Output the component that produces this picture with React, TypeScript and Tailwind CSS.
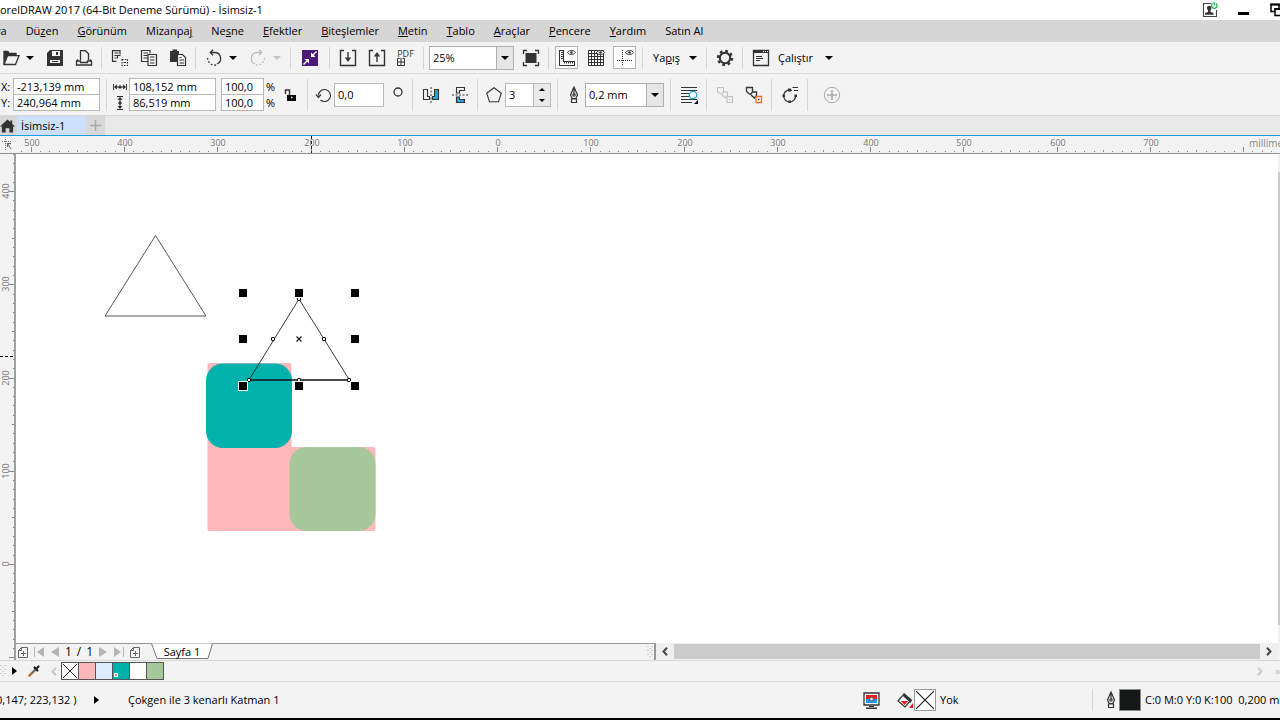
import { useState } from "react";
import type { ReactNode } from "react";
import clsx from "clsx";

const menus: Array<{ text: string; key?: number }> = [
  { text: "Düzen", key: 2 },
  { text: "Görünüm", key: 0 },
  { text: "Mizanpaj", key: 7 },
  { text: "Nesne", key: 2 },
  { text: "Efektler", key: 0 },
  { text: "Biteşlemler", key: 0 },
  { text: "Metin", key: 0 },
  { text: "Tablo", key: 0 },
  { text: "Araçlar", key: 0 },
  { text: "Pencere", key: 0 },
  { text: "Yardım", key: 0 },
  { text: "Satın Al" },
];

const swatches = [
  { name: "Pembe", className: "bg-[#ffb7ba]" },
  { name: "Açık mavi", className: "bg-[#deedfc]" },
  { name: "Turkuaz", className: "bg-[#00b0aa]" },
  { name: "Beyaz", className: "bg-white" },
  { name: "Yeşil", className: "bg-[#a6c89b]" },
];

// Pixels per 100 mm at 25% zoom
const STEP = 93.25;
const H_ZERO = 498;
const V_ZERO = 410;

function Icon({ children, size = 18 }: { children: ReactNode; size?: number }) {
  return (
    <svg width={size} height={size} viewBox={`0 0 ${size} ${size}`} fill="none" stroke="#333" strokeWidth="1.3" aria-hidden="true" className="shrink-0">
      {children}
    </svg>
  );
}

function Caret({ muted = false }: { muted?: boolean }) {
  return (
    <svg width="8" height="4" viewBox="0 0 8 4" aria-hidden="true">
      <path d="M0 0h8L4 4z" fill={muted ? "#c4c4c4" : "#000"} />
    </svg>
  );
}

function Separator({ tall = false }: { tall?: boolean }) {
  return (
    <div className="flex w-[7px] shrink-0 justify-center">
      <div className={clsx("w-px bg-[#d5d5d5]", tall ? "h-8" : "h-[22px]")} />
    </div>
  );
}

type ToolProps = {
  label: string;
  children: ReactNode;
  active?: boolean;
  className?: string;
};

function Tool({ label, children, active = false, className = "w-[29px]" }: ToolProps) {
  return (
    <button type="button" aria-label={label} className={clsx("flex h-6 shrink-0 items-center justify-center", className)}>
      <span className={clsx("flex h-[23px] w-[23px] items-center justify-center", active && "border border-[#b4b4b4] bg-white")}>
        {children}
      </span>
    </button>
  );
}

function CaretButton({ label, muted }: { label: string; muted?: boolean }) {
  return (
    <button type="button" aria-label={label} className="flex h-6 w-[15px] shrink-0 items-center pl-px">
      <Caret muted={muted} />
    </button>
  );
}

function Field({ label, value, className }: { label: string; value: string; className: string }) {
  return (
    <input
      aria-label={label}
      defaultValue={value}
      className={clsx("shrink-0 border border-[#b9b9b9] bg-white pl-[3px] outline-none focus:border-sky-500", className)}
    />
  );
}

function DropDown({ label, options, className }: { label: string; options: string[]; className: string }) {
  return (
    <div className={clsx("relative shrink-0", className)}>
      <select aria-label={label} className="h-6 w-full appearance-none border border-[#b0b0b0] bg-white pl-[3px] outline-none">
        {options.map((option) => (
          <option key={option}>{option}</option>
        ))}
      </select>
      <span className="pointer-events-none absolute inset-y-px right-px flex w-[17px] items-center justify-center border-l border-[#b0b0b0] bg-[#e6e6e6]">
        <Caret />
      </span>
    </div>
  );
}

function TitleBar() {
  return (
    <header className="flex h-5 items-center justify-between overflow-hidden bg-white">
      <h1 className="whitespace-nowrap">orelDRAW 2017 (64-Bit Deneme Sürümü) - İsimsiz-1</h1>
      <div className="-mr-[6px] flex items-center gap-5">
        <button type="button" aria-label="Hesap">
          <svg width="16" height="16" viewBox="0 0 16 16" aria-hidden="true">
            <path d="M9 1.500H1.500v13h13V8" fill="none" stroke="#444" strokeWidth="1.100" />
            <path d="M5 6a2.200 2.200 0 0 1 4.400 0c0 1.300-.7 1.700-.9 2.500V10l3 1v1.800H3V11l3-1V8.500C5.800 7.700 5 7.300 5 6z" fill="#333" />
            <path d="M10.600 1.600a2.700 2.700 0 1 0 3.300 0M12.200 0v3.600" fill="none" stroke="#1db455" strokeWidth="1.300" />
          </svg>
        </button>
        <button type="button" aria-label="Simge durumuna küçült">
          <svg width="12" height="14" viewBox="0 0 12 14" aria-hidden="true">
            <path d="M0 9h11v3H0z" fill="#000" />
          </svg>
        </button>
        <button type="button" aria-label="Önceki boyut">
          <svg width="16" height="14" viewBox="0 0 16 14" fill="none" stroke="#000" aria-hidden="true">
            <path d="M1 1.500h8v7H1z" strokeWidth="1.500" />
            <path d="M5 6h9v6.500H5z" fill="#fff" strokeWidth="1.500" />
            <path d="M.300 1.500h9.500M4.300 6h10" strokeWidth="2" />
          </svg>
        </button>
      </div>
    </header>
  );
}

function MenuBar() {
  return (
    <nav aria-label="Menü" className="flex h-[22px] items-center gap-[19px] overflow-hidden bg-[#d6d6d6]">
      <button type="button" className="-ml-[5px]">ya</button>
      {menus.map(({ text, key }) => (
        <button key={text} type="button" className="whitespace-nowrap">
          {key === undefined ? (
            text
          ) : (
            <>
              {text.slice(0, key)}
              <u className="underline-offset-1">{text[key]}</u>
              {text.slice(key + 1)}
            </>
          )}
        </button>
      ))}
    </nav>
  );
}

function Eye() {
  return (
    <>
      <path d="M9.500 3.500C11 .8 16 .8 17.500 3.500 16 6.200 11 6.200 9.500 3.500z" strokeWidth="1" fill="#fff" />
      <circle cx="13.500" cy="3.500" r="1.300" fill="#333" stroke="none" />
    </>
  );
}

function StandardBar() {
  return (
    <div role="toolbar" aria-label="Standart" className="flex h-8 items-center overflow-hidden border-b border-[#d8d8d8]">
      <Tool label="Aç" className="-ml-1 w-[29px]">
        <Icon>
          <path d="M2 15V2.500h4l1 2h7v2H5.300z" fill="#333" />
          <path d="M2 15.500 5.500 6.700H17l-3.500 8.800z" fill="#f3f3f3" />
        </Icon>
      </Tool>
      <CaretButton label="Son belgeler" />
      <Tool label="Kaydet">
        <Icon>
          <path d="M4 1h13v16H1V4z" fill="#333" stroke="none" />
          <path d="M6 2h8v5H6zM4 11h10v3H4z" fill="#f3f3f3" stroke="none" />
          <path d="M10 3h2v3h-2zM6 12h6v1H6z" fill="#333" stroke="none" />
        </Icon>
      </Tool>
      <Tool label="Yazdır">
        <Icon>
          <path d="M5.500 11V1.700h5l3 3V11" />
          <path d="M3 10.500 1.500 12v4h15v-4L15 10.500M1.500 12h4v1.500h7V12h4" />
        </Icon>
      </Tool>
      <Separator />
      <Tool label="Kes">
        <Icon>
          <path d="M9 5.500V1.600H1.500v10.800h4M3.500 4h4M3.500 6.500h4M3.500 9h2M6.500 9.500v-3h3" strokeWidth="1.200" />
          <path d="M11 10.500h5.500v6H11z" strokeDasharray="1.500 1.200" strokeWidth="1.100" />
          <path d="M12.500 13.500H15" strokeWidth="1" />
        </Icon>
      </Tool>
      <Tool label="Kopyala">
        <Icon>
          <path d="M8 12.500H1.500v-11H10v3M3.500 4H8M3.500 6.500H8M3.500 9H8" strokeWidth="1.200" />
          <path d="M8 5.500h8.500v11H8zM10 8h4.500M10 11h4.500M10 14h4.500" strokeWidth="1.200" />
        </Icon>
      </Tool>
      <Tool label="Yapıştır">
        <Icon>
          <path d="M1 2h2.500V.5H8V2h2v3H8v8H1z" fill="#333" stroke="none" />
          <path d="M8.500 5.500h5l3 3v8h-8zM10.500 8.500h2M10.500 11h4.500M10.500 14h4.500" strokeWidth="1.200" />
        </Icon>
      </Tool>
      <Separator />
      <Tool label="Geri al">
        <Icon>
          <path d="M6 3.500h3.500a6 6 0 0 1 2.500 11.500" />
          <path d="M11 16C6.500 17 2.500 13.500 2.500 8" strokeDasharray="1.800 1.800" />
          <path d="M8 .8 5.300 3.500 8 6.200" />
        </Icon>
      </Tool>
      <CaretButton label="Geri al geçmişi" />
      <Tool label="Yinele">
        <Icon>
          <g stroke="#bdbdbd">
            <path d="M12 3.500H8.500A6 6 0 0 0 6 15" />
            <path d="M7 16c4.500 1 8.500-2.500 8.500-8" strokeDasharray="1.800 1.800" />
            <path d="m10 .8 2.700 2.700L10 6.200" />
          </g>
        </Icon>
      </Tool>
      <CaretButton label="Yineleme geçmişi" muted />
      <Separator />
      <Tool label="İçerik ara" className="w-8">
        <Icon>
          <path d="M1 1h16v16H1z" fill="#4b1a78" stroke="none" />
          <path d="M10 8V3.500L11.800 5.300 15 2l1 1-3.300 3.200L14.500 8zM8 10v4.500L6.200 12.700 3 16l-1-1 3.300-3.200L3.500 10z" fill="#fff" stroke="none" />
        </Icon>
      </Tool>
      <Separator />
      <Tool label="Al">
        <Icon>
          <path d="M5 1.500H1.500v15h15v-15H13M9 3v8" strokeWidth="1.400" />
          <path d="M5.800 8.500h6.400L9 13z" fill="#333" stroke="none" />
        </Icon>
      </Tool>
      <Tool label="Ver">
        <Icon>
          <path d="M5 1.500H1.500v15h15v-15H13M9 13V5" strokeWidth="1.400" />
          <path d="M5.800 7.500h6.400L9 3z" fill="#333" stroke="none" />
        </Icon>
      </Tool>
      <Tool label="PDF olarak yayımla">
        <span className="flex flex-col items-start text-[9px] leading-[9px] text-[#333]">
          PDF
          <svg width="8" height="8" viewBox="0 0 8 8" fill="none" stroke="#333" aria-hidden="true">
            <path d="M2.500.5h-2v7h7v-7h-2M4 0v7M1 4h6" />
          </svg>
        </span>
      </Tool>
      <Separator />
      <DropDown label="Yakınlaştırma düzeyi" options={["25%", "50%", "100%"]} className="mx-[2px] w-[85px]" />
      <Tool label="Tam ekran önizleme">
        <Icon>
          <path d="M3.500 4h11v10h-11z" fill="#333" stroke="none" />
          <path d="M1.500 5V1.500H5M13 1.500h3.500V5M16.500 13v3.500H13M5 16.500H1.500V13" />
        </Icon>
      </Tool>
      <Separator />
      <Tool label="Cetvelleri göster" active>
        <Icon>
          <path d="M1.500 1.500h4v11h11v4h-15z" strokeWidth="1.100" />
          <path d="M3 3.500h2M3 5.500h2M3 7.500h2M3 9.500h2M6.500 13v1.500M8.500 13v1.500M10.500 13v1.500M12.500 13v1.500M14.500 13v1.500" strokeWidth="1" />
          <Eye />
        </Icon>
      </Tool>
      <Tool label="Kılavuz çizgileri ızgarası">
        <Icon>
          <path d="M1.500 1.500v15h15v-15zM4.500 2v15M7.500 2v15M10.500 2v15M13.500 2v15M1 4.500h16M1 7.500h16M1 10.500h16M1 13.500h16" strokeWidth="1" />
          <Eye />
        </Icon>
      </Tool>
      <Tool label="Kılavuz çizgileri" active>
        <Icon>
          <path d="M1 11.500h16M6.500 1v16" strokeDasharray="1 1" strokeWidth="1" />
          <Eye />
        </Icon>
      </Tool>
      <Separator />
      <button type="button" className="flex w-[57px] shrink-0 items-center justify-between pr-[6px] pl-[7px]">
        <span>Ya<u>p</u>ış</span>
        <Caret />
      </button>
      <Separator />
      <Tool label="Seçenekler">
        <Icon>
          <circle cx="9" cy="9" r="5.200" strokeWidth="2" />
          <circle cx="9" cy="9" r="7" strokeWidth="2.400" strokeDasharray="2.700 2.798" />
        </Icon>
      </Tool>
      <Separator />
      <button type="button" className="flex shrink-0 items-center gap-2 pl-[6px]">
        <Icon>
          <path d="M1.500 1.500h15v15h-15z" />
          <path d="M1 1h16v3H1z" fill="#333" stroke="none" />
          <path d="M4 7.500h6M4 9.500h7M4 11.500h4" strokeWidth="1" />
          <path d="M11 2.500h1M13 2.500h1M15 2.500h1" stroke="#fff" strokeWidth="1" />
        </Icon>
        <span className="pr-1">Çalıştır</span>
        <Caret />
      </button>
    </div>
  );
}

function PropertyBar() {
  return (
    <div role="toolbar" aria-label="Özellik çubuğu" className="flex h-[42px] items-center overflow-hidden border-b border-[#d8d8d8]">
      <div className="w-[13px] shrink-0 pl-px leading-4">
        <div>X:</div>
        <div>Y:</div>
      </div>
      <div className="flex shrink-0 flex-col">
        <Field label="X konumu" value="-213,139 mm" className="h-4 w-[87px] border-b-0" />
        <Field label="Y konumu" value="240,964 mm" className="h-[17px] w-[87px]" />
      </div>
      <div className="w-[3px] shrink-0" />
      <Separator tall />
      <div className="flex w-[19px] shrink-0 flex-col items-center gap-[2px]">
        <svg width="14" height="14" viewBox="0 0 14 14" fill="none" stroke="#333" aria-hidden="true">
          <path d="M.500 4v6M13.500 4v6M2 7h10" />
          <path d="M1 7l3-2.500v5zM13 7l-3-2.500v5zM7 5l2 2-2 2-2-2z" fill="#333" stroke="none" />
        </svg>
        <svg width="14" height="14" viewBox="0 0 14 14" fill="none" stroke="#333" aria-hidden="true">
          <path d="M4 .500h6M4 13.500h6M7 2v10" />
          <path d="M7 1 4.500 4h5zM7 13l-2.500-3h5zM7 5l2 2-2 2-2-2z" fill="#333" stroke="none" />
        </svg>
      </div>
      <div className="flex shrink-0 flex-col">
        <Field label="Genişlik" value="108,152 mm" className="h-4 w-[87px] border-b-0" />
        <Field label="Yükseklik" value="86,519 mm" className="h-[17px] w-[87px]" />
      </div>
      <div className="ml-[5px] flex shrink-0 flex-col">
        <Field label="Yatay ölçek" value="100,0" className="h-4 w-[43px] border-b-0" />
        <Field label="Dikey ölçek" value="100,0" className="h-[17px] w-[43px]" />
      </div>
      <div className="w-4 shrink-0 pl-[2px] leading-4">
        <div>%</div>
        <div>%</div>
      </div>
      <Tool label="Oranı kilitle" className="w-6 pr-1">
        <Icon size={14}>
          <path d="M2.500 6V2h4v6" strokeWidth="1.400" />
          <path d="M4 7h9v6H4z" fill="#000" stroke="none" />
          <path d="M8 9.500h1.500" stroke="#fff" />
        </Icon>
      </Tool>
      <Separator tall />
      <div className="flex w-[23px] shrink-0 justify-center pl-[2px]">
        <Icon>
          <path d="M3.500 9.500a6 6 0 1 1 2 4.500" strokeWidth="1.100" />
          <path d="m1 8.500 2.500 3L6 8.500" strokeWidth="1.200" />
        </Icon>
      </div>
      <Field label="Dönme açısı" value="0,0" className="h-6 w-[50px]" />
      <div className="flex w-[25px] shrink-0 items-start justify-center pb-[6px] pl-[2px]">
        <Icon size={12}>
          <circle cx="6" cy="6" r="4" />
        </Icon>
      </div>
      <Separator tall />
      <Tool label="Yatay aynala">
        <Icon>
          <path d="M1.500 3.500v10h6v-3h-2v-7z" strokeWidth="1.100" />
          <path d="M16.500 3.500v10h-6v-3h2v-7z" fill="#1fa8e0" strokeWidth="1.100" />
          <path d="M9 1v16" strokeDasharray="2 1.500" strokeWidth="1" />
        </Icon>
      </Tool>
      <Tool label="Dikey aynala">
        <Icon>
          <path d="M13.500 1.500h-8V7h3V4.500h5z" strokeWidth="1.100" />
          <path d="M13.500 16.500h-8V11h3v2.500h5z" fill="#1fa8e0" strokeWidth="1.100" />
          <path d="M1 9h16" strokeDasharray="2 1.500" strokeWidth="1" />
        </Icon>
      </Tool>
      <Separator tall />
      <div className="flex w-6 shrink-0 justify-center pl-[2px]">
        <Icon>
          <path d="m9 1.800 7.300 5.400-2.800 8.600h-9L1.700 7.200z" strokeWidth="1.100" />
        </Icon>
      </div>
      <Field label="Nokta veya kenar sayısı" value="3" className="h-6 w-7 border-r-0" />
      <div className="flex h-6 w-[18px] shrink-0 flex-col border border-[#b9b9b9] bg-[#e9e9e9]">
        <button type="button" aria-label="Artır" className="flex flex-1 rotate-180 items-center justify-center">
          <svg width="6" height="3" aria-hidden="true"><path d="M0 0h6L3 3z" /></svg>
        </button>
        <button type="button" aria-label="Azalt" className="flex flex-1 items-center justify-center">
          <svg width="6" height="3" aria-hidden="true"><path d="M0 0h6L3 3z" /></svg>
        </button>
      </div>
      <div className="w-[3px] shrink-0" />
      <Separator tall />
      <div className="flex w-6 shrink-0 justify-center pl-[2px]">
        <PenNib />
      </div>
      <DropDown label="Anahat genişliği" options={["0,2 mm", "0,5 mm", "1,0 mm"]} className="mr-[3px] w-[79px]" />
      <Separator tall />
      <Tool label="Metni kaydır">
        <Icon>
          <path d="M1 1.500h16M1 4.500h16M1 7.500h16M1 10.500h16M1 13.500h16M1 16.500h11" strokeWidth="1.200" />
          <circle cx="13" cy="9" r="3.700" fill="#fff" stroke="#1fa8e0" />
          <path d="M18 14v4h-4z" fill="#000" stroke="none" />
        </Icon>
      </Tool>
      <Separator tall />
      <Tool label="Katmanın önüne">
        <Icon>
          <g stroke="#c0c0c0">
            <path d="M1.500 1.500h6v4L6 8H4.500l-3-2.500zM7.500 6h4v3.500l-2 2.500-3.500-3" strokeWidth="1.100" />
            <path d="M11 10.500h5.500v6H11zM13 13.500h1.500" strokeWidth="1.100" />
          </g>
        </Icon>
      </Tool>
      <Tool label="Katmanın arkasına">
        <Icon>
          <path d="M1.500 1.500h6v4L6 8H4.500l-3-2.500zM7.500 6h4v3.500l-2 2.500-3.500-3" />
          <path d="M11 10.500h5.500v6H11z" stroke="#f26a1b" fill="#fff" />
          <path d="M13 13.500h1.500" />
        </Icon>
      </Tool>
      <Separator tall />
      <Tool label="Eğrilere dönüştür">
        <Icon>
          <path d="M11 4.500A6 6 0 1 0 14.500 9" strokeWidth="1.200" />
          <path d="M11.500 1.500H17M13 4.500h4" strokeWidth="1.200" />
          <path d="M7 2.500h3v3H7zM1.500 8.500h2.500v2.500H1.500zM7.500 14.500h2.500V17H7.500zM13.500 8.500H16V11h-2.500z" fill="#333" stroke="none" />
        </Icon>
      </Tool>
      <Separator tall />
      <Tool label="Özelleştir" className="ml-[6px] w-[29px]">
        <Icon>
          <g stroke="#aaa">
            <circle cx="9" cy="9" r="7.700" strokeWidth="1" />
            <path d="M9 4v10M4 9h10" strokeWidth="1.600" />
          </g>
        </Icon>
      </Tool>
    </div>
  );
}

function PenNib() {
  return (
    <svg width="10" height="18" viewBox="0 0 10 18" fill="none" stroke="#333" strokeWidth="1.200" className="shrink-0" aria-hidden="true">
      <path d="M5 1 1.500 9l1.700 3.500h3.600L8.500 9zM5 2v6M2.500 13h5v3.500h-5z" />
      <circle cx="5" cy="9" r="1.200" />
    </svg>
  );
}

function TabBar() {
  return (
    <div className="flex h-5 items-stretch border-b border-[#169fdc] bg-[#e8e8e8]">
      <button type="button" aria-label="Hoş geldiniz ekranı" className="flex w-[17px] items-center bg-[#d6d6d6]">
        <svg width="15" height="14" viewBox="0 0 16 14" fill="#333" aria-hidden="true">
          <path d="M8 0 0 7.500h2V14h4V9.500h4V14h4V7.500h2l-3-2.800V1h-2v1.800z" />
        </svg>
      </button>
      <button type="button" className="w-[69px] bg-[#cce0fc] pl-1 text-left">İsimsiz-1</button>
      <button type="button" aria-label="Yeni belge" className="flex w-[19px] items-center justify-center bg-[#d8d8d8]">
        <svg width="11" height="11" viewBox="0 0 11 11" stroke="#a8a8a8" strokeWidth="1.500" aria-hidden="true">
          <path d="M5.500 0v11M0 5.500h11" />
        </svg>
      </button>
    </div>
  );
}

function HorizontalRuler() {
  const ticks = Array.from({ length: 320 }, (_, i) => i - 51);

  return (
    <div className="relative h-[18px] overflow-hidden border-b border-[#8f8f8f]">
      <svg width="100%" height="17" className="block text-[9px]" aria-hidden="true">
        {ticks.map((n) => {
          const x = Math.round(H_ZERO + (n * STEP) / 10);
          const height = n % 10 === 0 ? 5 : n % 5 === 0 ? 2 : 1;
          return x > 15 ? <rect key={n} x={x - 1} y={16 - height} width="1" height={height} fill="#888" /> : null;
        })}
        {[-5, -4, -3, -2, -1, 0, 1, 2, 3, 4, 5, 6, 7].map((n) => (
          <text key={n} x={Math.round(H_ZERO + n * STEP)} y="10" textAnchor="middle" fill="#777">
            {Math.abs(n) * 100}
          </text>
        ))}
        <path d="M311.500 0v17" stroke="#222" strokeDasharray="3 2" />
        <path d="M2 5.500h10M5.500 3v11" stroke="#777" strokeDasharray="1 1" fill="none" />
        <path d="m7 7 4 6M7.500 11V7.500H11" stroke="#666" fill="none" />
      </svg>
      <span className="absolute top-0 right-0 w-[31px] overflow-hidden text-[10px] leading-[14px] whitespace-nowrap text-[#888]">
        millimetre
      </span>
    </div>
  );
}

function VerticalRuler() {
  const ticks = Array.from({ length: 140 }, (_, i) => i - 94);

  return (
    <div className="relative w-4 shrink-0 overflow-hidden border-r-2 border-[#a0a0a0]">
      <svg width="14" height="100%" className="absolute inset-0 text-[9px]" aria-hidden="true">
        {ticks.map((n) => {
          const y = Math.round(V_ZERO - (n * STEP) / 10);
          const width = n % 10 === 0 ? 5 : n % 5 === 0 ? 2 : 1;
          return <rect key={n} x={14 - width} y={y} width={width} height="1" fill="#888" />;
        })}
        {[0, 1, 2, 3, 4].map((n) => (
          <text key={n} transform={`translate(9 ${Math.round(V_ZERO - n * STEP)}) rotate(-90)`} textAnchor="middle" fill="#777">
            {n * 100}
          </text>
        ))}
        <path d="M0 202.500h14" stroke="#000" strokeDasharray="3 2" />
      </svg>
    </div>
  );
}

const handles = [
  [227, 139],
  [283, 139],
  [339, 139],
  [227, 185],
  [339, 185],
  [227, 232],
  [283, 232],
  [339, 232],
];

const nodes = [
  [283, 145],
  [257, 185],
  [308, 185],
  [233, 226],
  [283, 226],
  [333, 226],
];

function Drawing() {
  return (
    <svg width="100%" height="100%" className="absolute inset-0" role="img" aria-label="Çizim">
      <path d="M191.500 211q0-2 2-2h80q2 0 2 2v82h82q2 0 2 2v80q0 2-2 2h-164q-2 0-2-2z" fill="#ffb9bb" />
      <rect x="190" y="209.500" width="86" height="84.500" rx="17" fill="#00b1ac" />
      <rect x="273.500" y="293" width="86" height="84" rx="17" fill="#a6c89b" />
      <path d="m139.500 81.500 50.500 80.500H89z" fill="none" stroke="#444" strokeWidth="0.900" />
      <path d="m283 145 50.500 81" fill="none" stroke="#222" strokeWidth="0.900" />
      <path d="m283 145-50 81" fill="none" stroke="#222" strokeWidth="0.900" />
      <path d="M233 226h100.500" stroke="#111" strokeWidth="1.300" />
      {nodes.map(([x, y]) => (
        <rect key={`${x}-${y}`} x={x - 1.500} y={y - 1.500} width="3" height="3" rx="0.500" fill="#fff" stroke="#000" />
      ))}
      {handles.map(([x, y]) => (
        <rect key={`${x}-${y}`} x={x - 4.500} y={y - 4.500} width="9" height="9" stroke="#fff" />
      ))}
      <path d="m280.500 182.500 5 5m0-5-5 5" stroke="#222" strokeWidth="1.300" />
    </svg>
  );
}

function PageArrow({ label, flip = false, end = false }: { label: string; flip?: boolean; end?: boolean }) {
  return (
    <button type="button" aria-label={label} className={clsx("flex h-4 w-4 items-center justify-center", flip && "rotate-180")}>
      <svg width="10" height="10" viewBox="0 0 10 10" fill="#b4b4b4" aria-hidden="true">
        {end ? <path d="M0 0h1v10H0zM10 0v10L3 5z" /> : <path d="M9 0v10L1 5z" />}
      </svg>
    </button>
  );
}

function AddPage({ label }: { label: string }) {
  return (
    <button type="button" aria-label={label} className="flex h-4 w-4 items-center justify-center">
      <svg width="10" height="11" viewBox="0 0 10 11" fill="none" stroke="#666" aria-hidden="true">
        <path d="M3.500.5h6v10h-9v-7zM3.500.5v3h-3M5.500 4v5M3 6.500h5" />
      </svg>
    </button>
  );
}

function Grip() {
  return (
    <svg width="7" height="14" viewBox="0 0 7 14" aria-hidden="true" className="shrink-0">
      <path d="M1 1v12M5 1v12" stroke="#aaa" strokeDasharray="1 3" />
      <path d="M3 3v10" stroke="#aaa" strokeDasharray="1 3" />
    </svg>
  );
}

function Chevron({ className, flip = false }: { className: string; flip?: boolean }) {
  return (
    <svg width="6" height="9" viewBox="0 0 6 9" fill="none" stroke="currentColor" strokeWidth="2" aria-hidden="true" className={clsx(className, flip && "rotate-180")}>
      <path d="M5 .8 1.500 4.500 5 8.200" />
    </svg>
  );
}

function PageBar() {
  return (
    <div className="flex h-[17px] bg-[#f3f3f3]">
      <div className="flex w-[640px] shrink-0 items-center border-t border-r-2 border-[#999]">
        <div className="-ml-px flex items-center">
          <AddPage label="Başa sayfa ekle" />
          <PageArrow label="İlk sayfa" end />
          <PageArrow label="Önceki sayfa" />
          <span className="flex w-8 justify-between px-[2px] text-xs leading-4">
            <span>1</span>
            <span>/</span>
            <span>1</span>
          </span>
          <PageArrow label="Sonraki sayfa" flip />
          <PageArrow label="Son sayfa" flip end />
          <AddPage label="Sona sayfa ekle" />
        </div>
        <button type="button" className="relative ml-2 h-4 w-[62px]">
          <svg width="62" height="17" viewBox="0 0 62 17" className="absolute -top-px left-0" aria-hidden="true">
            <path d="M0 .5h62l-5 15.500H6z" fill="#fff" />
            <path d="M.500.5 6 15.500h51L61.500.5" fill="none" stroke="#777" />
          </svg>
          <span className="relative block leading-[14px]">Sayfa 1</span>
        </button>
        <span className="ml-auto"><Grip /></span>
      </div>
      <div className="mr-[2px] flex flex-1 items-stretch">
        <button type="button" aria-label="Sola kaydır" className="flex w-[18px] items-center justify-center bg-[#efefef]">
          <Chevron className="text-[#444]" />
        </button>
        <div className="my-px flex-1 bg-[#cbcbcb]" />
        <button type="button" aria-label="Sağa kaydır" className="flex w-[18px] items-center justify-center bg-[#efefef]">
          <Chevron className="text-[#444]" flip />
        </button>
      </div>
    </div>
  );
}

function NoneMark({ size }: { size: number }) {
  return (
    <svg width={size} height={size} viewBox="0 0 18 18" stroke="#222" strokeWidth="1.100" className="bg-white" aria-hidden="true">
      <path d="m1 1 16 16M17 1 1 17" />
    </svg>
  );
}

function Palette() {
  const [selected, setSelected] = useState("Turkuaz");

  return (
    <div className="flex h-[21px] items-center overflow-hidden border-t border-[#d8d8d8]">
      <Grip />
      <button type="button" aria-label="Palet menüsü" className="flex w-[15px] justify-center">
        <svg width="5" height="8" aria-hidden="true"><path d="M0 0v8l5-4z" /></svg>
      </button>
      <button type="button" aria-label="Renk damlalığı" className="flex w-6 justify-center">
        <svg width="14" height="14" viewBox="0 0 14 14" fill="none" aria-hidden="true">
          <path d="m2 12 6.500-6.500" stroke="#666" strokeWidth="2.400" />
          <path d="m1.500 12.500 4-4" stroke="#d96b2b" strokeWidth="1.600" />
          <path d="m7.500 3.500 3 3M9.500 4.500l2-2" stroke="#222" strokeWidth="2.200" strokeLinecap="round" />
        </svg>
      </button>
      <button type="button" aria-label="Paleti sola kaydır" className="flex w-[15px] items-center justify-center">
        <Chevron className="text-[#c9c9c9]" />
      </button>
      <div className="flex h-[18px] border border-[#555]">
        <button type="button" aria-label="Renk yok" className="w-4">
          <NoneMark size={16} />
        </button>
        {swatches.map((swatch) => (
          <button
            key={swatch.name}
            type="button"
            aria-label={swatch.name}
            onClick={() => setSelected(swatch.name)}
            className={clsx("flex w-[17px] items-end border-l border-[#555] pb-[2px] pl-px", swatch.className)}
          >
            {selected === swatch.name ? <span className="h-1 w-1 border border-white bg-[#c88]" /> : null}
          </button>
        ))}
      </div>
      <div className="ml-auto flex items-center gap-3 text-[#b8b8b8]">
        <Chevron className="text-[#c9c9c9]" flip />
        <span className="w-[5px] overflow-hidden">»</span>
      </div>
    </div>
  );
}

function StatusBar() {
  return (
    <footer className="flex h-[39px] items-center overflow-hidden border-t border-b-2 border-t-[#d8d8d8] border-b-black whitespace-nowrap">
      <span className="-ml-1 w-[97px]">0,147; 223,132 )</span>
      <button type="button" aria-label="Durum ayrıntıları" className="w-[35px] pl-px">
        <svg width="5" height="8" aria-hidden="true"><path d="M0 0v8l5-4z" /></svg>
      </button>
      <span>Çokgen ile 3 kenarlı Katman 1</span>
      <div className="ml-auto flex items-center">
        <button type="button" aria-label="Renk prova ayarları" className="mr-[17px]">
          <svg width="17" height="17" viewBox="0 0 17 17" aria-hidden="true">
            <path d="M1 1h15v12H1z" fill="#fff" stroke="#333" strokeWidth="1.300" />
            <path d="M3 3h11v4H3z" fill="#f01818" />
            <path d="M3 7h11v4H3z" fill="#1c9cf0" />
            <circle cx="8.500" cy="7" r="2" fill="#ddd" stroke="#555" />
            <path d="M6 14h5v1H6zM3 15.500h11v1.500H3z" fill="#333" />
          </svg>
        </button>
        <div className="flex w-[195px] items-center">
          <svg width="17" height="17" viewBox="0 0 17 17" aria-hidden="true">
            <path d="m1 9 6-7 7 6-6 7z" fill="#fff" stroke="#333" strokeWidth="1.200" />
            <path d="m7 1 8 7-1.500 3L6 4z" fill="#333" />
            <path d="M4 9h7l-3.500 4zM16 11v5h-4z" fill="#f01818" />
          </svg>
          <span className="mr-1 border border-[#999]"><NoneMark size={20} /></span>
          Yok
        </div>
        <div className="h-[22px] w-px bg-[#d5d5d5]" />
        <div className="flex w-[187px] items-center pl-[13px]">
          <PenNib />
          <span className="mr-1 ml-[3px] h-[22px] w-[22px] shrink-0 border border-[#888] bg-[#161818]" />
          <span className="whitespace-pre">C:0 M:0 Y:0 K:100  0,200 mm</span>
        </div>
      </div>
    </footer>
  );
}

export default function App() {
  return (
    <div className="flex min-h-screen flex-col overflow-hidden bg-[#f3f3f3] font-['Open_Sans','Noto_Sans',sans-serif] text-[11px] leading-4 text-black">
      <TitleBar />
      <MenuBar />
      <StandardBar />
      <PropertyBar />
      <TabBar />
      <HorizontalRuler />
      <div className="flex flex-1 items-stretch">
        <VerticalRuler />
        <main className="flex min-w-0 flex-1 flex-col">
          <div className="flex flex-1">
            <div className="relative flex-1 bg-white">
              <Drawing />
            </div>
            <div className="w-[2px] bg-[#f0f0f0] py-[18px]">
              <div className="h-full bg-[#cbcbcb]" />
            </div>
          </div>
          <PageBar />
        </main>
      </div>
      <Palette />
      <StatusBar />
    </div>
  );
}
